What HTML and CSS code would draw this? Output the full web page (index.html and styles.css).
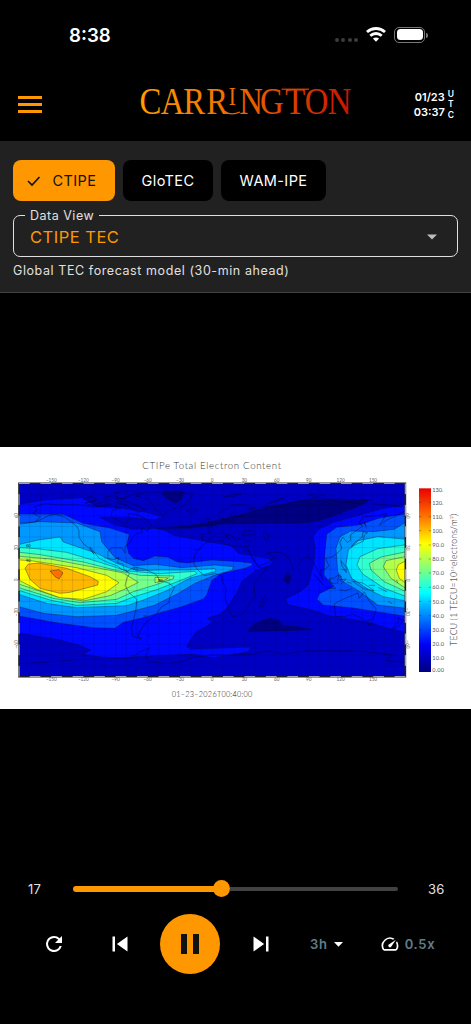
FILE: index.html
```html
<!DOCTYPE html>
<html lang="en">
<head>
    <meta charset="UTF-8">
    <meta name="viewport" content="width=device-width, initial-scale=1.0">
    <title>Carrington</title>
    <link rel="stylesheet" href="styles.css">
</head>
<body>
    <!-- Status bar -->
    <div class="status-bar">
        <span class="clock">8:38</span>
        <div class="status-icons">
            <div class="signal"><i></i><i></i><i></i><i></i></div>
            <svg class="wifi" width="20" height="15" viewBox="0 0 20 15" fill="none" stroke="#fff" stroke-width="2.9">
                <path d="M1 5C6.200.4 13.8.4 19 5"/>
                <path d="M4.300 8.700C7.500 5.800 12.500 5.800 15.700 8.700"/>
                <path d="M6.900 11.600Q10 9.200 13.100 11.600L10 14.700Z" fill="#fff" stroke="none"/>
            </svg>
            <div class="battery"><div class="battery-fill"></div></div>
            <div class="battery-tip"></div>
        </div>
    </div>

    <!-- App bar -->
    <header>
        <div class="menu"><i></i><i></i><i></i></div>
        <svg class="logo" width="214" height="48" viewBox="0 0 214 48">
            <defs>
                <linearGradient id="flare" gradientUnits="userSpaceOnUse" x1="0" y1="0" x2="250" y2="0">
                    <stop offset="0" stop-color="#ffa000"/>
                    <stop offset="0.45" stop-color="#f06a00"/>
                    <stop offset="1" stop-color="#c81400"/>
                </linearGradient>
            </defs>
            <text transform="scale(.85 1)" y="37" x="0.500 25.500 52 79 105.500 118 142.500 172 195 222" fill="url(#flare)">CARR<tspan class="small-i" dy="-9">I</tspan><tspan dy="9">NGTON</tspan></text>
            <path d="M86 34.500Q92 39 101 35" fill="none" stroke="#ee6800" stroke-width="1.300"/>
            <path d="M142.500 12.200H170" fill="none" stroke="#dc4400" stroke-width="1.200"/>
        </svg>
        <div class="utc">
            <div class="utc-time">01/23<br>03:37</div>
            <div class="utc-label">U<br>T<br>C</div>
        </div>
    </header>

    <!-- Model and data view -->
    <section class="filters">
        <div class="chips">
            <div class="chip active">
                <svg width="14" height="12" viewBox="0 0 14 12" fill="none" stroke="#111" stroke-width="1.700"><path d="M1 6L5 10L12.500 2"/></svg>
                <span>CTIPE</span>
            </div>
            <div class="chip glotec">GloTEC</div>
            <div class="chip wam">WAM-IPE</div>
        </div>
        <fieldset class="select">
            <legend>Data View</legend>
            <span>CTIPE TEC</span>
            <svg width="10" height="6" viewBox="0 0 10 6"><path d="M0 .5H10L5 5.500Z" fill="#bdbdbd"/></svg>
        </fieldset>
        <p class="description">Global TEC forecast model (30-min ahead)</p>
    </section>

    <!-- Forecast map -->
    <main>
        <svg class="chart" width="471" height="262" viewBox="0 6 1413 786">
            <defs>
                <linearGradient id="tec" x1="0" y1="1" x2="0" y2="0">
                    <stop offset="0" stop-color="#000080"/>
                    <stop offset=".15" stop-color="#0000f8"/>
                    <stop offset=".36" stop-color="#00b4ff"/>
                    <stop offset=".43" stop-color="#00ffff"/>
                    <stop offset=".56" stop-color="#80ff80"/>
                    <stop offset=".7" stop-color="#ffff00"/>
                    <stop offset=".85" stop-color="#ff7000"/>
                    <stop offset="1" stop-color="#e80000"/>
                </linearGradient>
                <clipPath id="frame"><rect x="57" y="115" width="1159" height="580"/></clipPath>
            </defs>
            <text class="chart-title" x="427" y="73" textLength="416">CTIPe Total Electron Content</text>

            <g clip-path="url(#frame)">
                <rect x="57" y="115" width="1159" height="580" fill="#0000c4"/>
                <g class="levels">
                    <!-- below 10 -->
                    <g fill="#000080">
                        <path d="M465 250Q570 243 615 235L715 210L815 185L895 168L1000 162L1103 165Q1100 177 1033 200L963 226Q910 237 865 235L665 237L565 250Z"/>
                        <path d="M485 142L530 138L552 142L545 162L528 175L495 158Z"/>
                        <path d="M852 400L858 386L869 384L873 395L867 418L853 409Z"/>
                        <path d="M744 560L752 545L785 527L812 520L838 527L845 540L900 546L940 554L850 557Z"/>
                    </g>
                    <!-- 20 -->
                    <g fill="#0008ff">
                        <path d="M50 180L130 165L250 158L290 185L370 190L440 202L490 216L465 224L380 217L300 217L340 238L400 253L465 250L500 258L520 271L635 292L695 302L715 325L805 340L817 350L812 360L765 378L725 410L710 445L680 490L660 508L622 520L640 532L590 560L575 580L560 605L575 613L665 609L753 606L745 620L640 638L580 628L465 632L330 640L250 628L272 615L235 600L180 585L50 563Z"/>
                        <path d="M1220 180L1150 190L1080 210L1000 232L955 253L940 275L946 310L942 350L925 420L900 440L857 462L862 478L945 497L985 512L1105 531L1180 555L1220 562Z"/>
                    </g>
                    <!-- 30 -->
                    <g fill="#0050ff">
                        <path d="M50 207L190 208L250 235L330 249L388 268L380 300L386 325L400 340L430 347L465 333L505 337L530 350L560 354L635 345L720 350L755 354L757 361L735 370L665 385L635 407L620 450L610 462L545 485L465 508L430 518L370 532L345 550L280 548L180 535L50 512Z"/>
                        <path d="M1220 207L1180 212L1135 220L1080 239L1010 247L980 268L975 320L972 390L1000 425L958 446L951 463L970 480L1060 489L1110 497L1220 514Z"/>
                    </g>
                    <!-- 40 -->
                    <g fill="#0098ff">
                        <path d="M50 235L120 230L230 234L300 260L305 290L345 338L400 362L465 358L545 368L645 360L700 365L697 375L645 390L585 415L535 445L465 480L430 490L350 511L230 515L130 505L50 483Z"/>
                        <path d="M1220 230L1183 253L1120 260L1053 258L1020 275L1008 310L1013 380L1030 410L1080 440L1133 480L1220 490Z"/>
                    </g>
                    <!-- 50 -->
                    <g fill="#00e4ff">
                        <path d="M50 300L115 285L180 276L190 291L290 325L350 355L410 377L480 375L565 375L645 371L648 379L570 399L500 437L430 465L380 482L230 488L140 475L50 446Z"/>
                        <path d="M1220 283L1133 275L1075 287L1045 315L1038 360L1055 400L1105 433L1150 455L1220 468Z"/>
                    </g>
                    <!-- 60 -->
                    <g fill="#30ffd0">
                        <path d="M50 307L110 311L200 322L300 352L380 378L480 386L585 379L590 386L540 407L470 434L400 456L350 475L230 481L150 465L50 434Z"/>
                        <path d="M1220 299L1133 311L1080 335L1071 360L1088 387L1153 430L1220 455Z"/>
                    </g>
                    <!-- 70 -->
                    <g fill="#74ff8c">
                        <path d="M50 321L120 329L250 351L340 374L420 391L522 393L520 401L465 420L400 440L350 463L240 473L160 460L50 426Z"/>
                        <path d="M1220 320L1143 336L1108 355L1113 375L1153 410L1220 441Z"/>
                    </g>
                    <!-- 80 -->
                    <g fill="#b4ff48">
                        <path d="M50 333L150 342L300 370L370 384L415 412L380 430L330 452L250 468L170 455L50 415Z"/>
                        <path d="M465 397L505 399L490 408L465 413Z"/>
                        <path d="M1220 334L1158 347L1150 365L1173 400L1220 432Z"/>
                    </g>
                    <!-- 90 -->
                    <g fill="#ffff00">
                        <path d="M50 344L100 348L230 368L320 391L357 413L320 440L250 463L180 458L110 433L50 402Z"/>
                        <path d="M1220 346L1195 359L1189 375L1198 400L1220 417Z"/>
                    </g>
                    <path fill="#ffb800" d="M75 370L85 357L118 354L200 370L270 395L295 409L293 420L210 442L180 445L120 430L90 403Z"/>
                    <path fill="#ff7000" d="M150 378L177 374L189 384L177 402L165 395Z"/>
                </g>

                <!-- coastlines in degrees, longitude and latitude -->
                <g class="coast" transform="translate(636 405) scale(3.22 -3.22)">
                    <path d="M-179 52L-165 54L-158 57L-152 60L-146 61L-138 59L-132 55L-126 50L-124 46L-124 40L-120 34L-115 30L-110 24L-114 31L-109 25L-105 20L-96 16L-88 13L-84 10L-79 8L-82 10L-83 15L-88 16L-87 21L-91 19L-97 20L-97 27L-93 30L-84 30L-81 25L-81 31L-76 35L-74 40L-70 43L-65 44L-66 49L-60 46L-56 51L-62 57L-70 61L-78 62L-77 56L-82 52L-88 56L-94 59L-93 65L-85 67L-95 70L-110 68L-125 70L-140 70L-156 71L-166 68L-163 65L-167 62L-160 59L-165 54"/>
                    <path d="M-79 8L-76 10L-72 12L-62 10L-52 5L-49 0L-40-3L-35-7L-39-15L-40-21L-47-25L-52-32L-57-36L-62-40L-66-46L-69-52L-66-55L-74-52L-75-44L-73-37L-71-28L-70-18L-77-12L-81-5L-79 2L-77 6L-79 8"/>
                    <path d="M-120 76L-112 78L-107 75L-115 73L-120 76M-118 72L-108 73L-104 69L-115 70ZM-100 77L-91 79L-95 74L-100 76M-88 73L-78 73L-72 70L-62 66L-68 63L-74 66L-80 70L-90 72ZM-92 81L-80 83L-65 82L-75 79L-85 76L-90 78M-105 72L-99 74L-97 71L-102 69ZM-90 76L-80 76L-86 74Z"/>
                    <path d="M-54 82L-35 83L-18 80L-22 74L-27 69L-40 65L-45 60L-53 66L-55 70L-60 76L-71 78L-62 82Z"/>
                    <path d="M-24 65L-20 66L-14 65L-18 63L-23 64ZM-5 50L1 52L-2 57L-5 58L-3 54L-5 50M-10 52L-6 52L-6 55L-10 54Z"/>
                    <path d="M-9 37L-9 43L-1 44L-4 48L2 51L8 54L10 57L12 54L20 55L24 59L29 60L22 60L22 65L17 61L14 55L8 58L5 61L12 66L20 70L30 70L40 67L33 66L40 64L46 68L60 69L68 68L72 72L80 73L100 77L112 74L130 72L150 71L170 69L179 68M-9 37L-5 36L0 39L4 43L9 44L16 38L12 43L16 42L20 40L23 37L26 40L30 36L36 36L34 31L25 32L20 31L11 34L10 37L-5 35L-10 31L-16 24L-17 15L-13 9L-7 4L3 6L9 4L10-2L13-8L12-17L16-28L19-34L26-33L32-28L36-20L40-15L39-5L43 1L51 11L43 12L38 19L33 29L43 13L52 16L59 22L51 25L57 26L66 25L72 20L76 9L80 13L82 17L89 22L94 17L98 10L103 1L101 9L105 10L109 13L106 20L113 22L121 29L119 35L122 40L126 35L129 37L129 42L140 50L137 54L142 59L155 60L163 62L156 51L163 56L172 60L179 64"/>
                    <path d="M28 42L35 42L41 42L37 46L31 46ZM48 46L53 42L52 37L49 38L48 43ZM44-25L49-14L50-17L47-25ZM11 77L18 80L27 80L20 78ZM52 71L58 74L68 77L60 73ZM90 79L100 81L105 79L96 78ZM138 75L149 75L145 73Z"/>
                    <path d="M95 5L104-5L100 0L95 5M105-7L115-8L109 1L114 2L118 5L117-3L110-3L109 1M120-4L125 1L119 0M120 18L125 12L125 7L121 14ZM131-1L141-3L151-10L141-8L135-4ZM130 31L136 34L141 36L142 42L145 44L141 45L140 40L133 35ZM143 50L142 54L144 48M118-9L124-10L130-8M119 4L121 3M126-2L130-3M121 10L124 9M146-5L152-5M155-7L163-11M164-20L168-22M172 0L173-3M-155 20L-156 19M-10 29L-17 28M80 8L82 7"/>
                    <path d="M114-22L122-18L129-15L136-12L137-17L142-11L146-19L153-27L150-37L144-38L138-35L131-32L124-34L115-34ZM145-41L148-41L147-43ZM173-35L178-38L175-42L171-45L167-46L172-41L174-38ZM69-49L70-49M-59-52L-57-52M-61-51L-60-52"/>
                    <path d="M-180-78L-160-77L-148-76L-125-74L-102-74L-100-72L-75-73L-67-67L-58-63L-62-70L-60-76L-42-78L-28-76L-18-72L0-70L20-70L38-69L52-66L68-69L85-66L110-66L130-66L145-67L168-70L162-75L180-77"/>
                </g>
                <path class="grid" d="M89 115V695M121 115V695M154 115V695M186 115V695M218 115V695M250 115V695M282 115V695M315 115V695M347 115V695M379 115V695M411 115V695M443 115V695M476 115V695M508 115V695M540 115V695M572 115V695M604 115V695M636 115V695M669 115V695M701 115V695M733 115V695M765 115V695M797 115V695M830 115V695M862 115V695M894 115V695M926 115V695M958 115V695M991 115V695M1023 115V695M1055 115V695M1087 115V695M1119 115V695M1152 115V695M1184 115V695M57 147H1216M57 179H1216M57 212H1216M57 244H1216M57 276H1216M57 308H1216M57 340H1216M57 373H1216M57 405H1216M57 437H1216M57 469H1216M57 501H1216M57 534H1216M57 566H1216M57 598H1216M57 630H1216M57 663H1216"/>
                <g class="contour-label">
                    <text x="78" y="306">60</text><text x="78" y="350">90</text><text x="400" y="375">40</text>
                    <text x="428" y="519">30</text><text x="532" y="352">30</text><text x="474" y="412">80</text><text x="392" y="638">20</text>
                </g>
            </g>
            <rect class="frame" x="57" y="115" width="1159" height="580"/>
            <rect class="frame-dash" x="57" y="115" width="1159" height="580"/>

            <g class="axis">
                <g>
                    <text x="154" y="110">−150</text><text x="250" y="110">−120</text><text x="347" y="110">−90</text>
                    <text x="443" y="110">−60</text><text x="540" y="110">−30</text><text x="636" y="110">0</text>
                    <text x="733" y="110">30</text><text x="830" y="110">60</text><text x="926" y="110">90</text>
                    <text x="1022" y="110">120</text><text x="1119" y="110">150</text>
                </g>
                <g>
                    <text x="154" y="709">−150</text><text x="250" y="709">−120</text><text x="347" y="709">−90</text>
                    <text x="443" y="709">−60</text><text x="540" y="709">−30</text><text x="636" y="709">0</text>
                    <text x="733" y="709">30</text><text x="830" y="709">60</text><text x="926" y="709">90</text>
                    <text x="1022" y="709">120</text><text x="1119" y="709">150</text>
                </g>
                <g>
                    <text transform="translate(53 212) rotate(-90)">60</text><text transform="translate(53 308) rotate(-90)">30</text>
                    <text transform="translate(53 405) rotate(-90)">0</text><text transform="translate(53 501) rotate(-90)">−30</text>
                    <text transform="translate(53 598) rotate(-90)">−60</text>
                </g>
                <g>
                    <text transform="translate(1219 212) rotate(90)">60</text><text transform="translate(1219 308) rotate(90)">30</text>
                    <text transform="translate(1219 405) rotate(90)">0</text><text transform="translate(1219 501) rotate(90)">−30</text>
                    <text transform="translate(1219 598) rotate(90)">−60</text>
                </g>
            </g>

            <!-- color scale -->
            <rect x="1257" y="130" width="36" height="551" fill="url(#tec)"/>
            <path class="scale-ticks" d="M1257 172H1264M1286 172H1293M1257 215H1264M1286 215H1293M1257 257H1264M1286 257H1293M1257 300H1264M1286 300H1293M1257 342H1264M1286 342H1293M1257 384H1264M1286 384H1293M1257 427H1264M1286 427H1293M1257 469H1264M1286 469H1293M1257 512H1264M1286 512H1293M1257 554H1264M1286 554H1293M1257 596H1264M1286 596H1293M1257 639H1264M1286 639H1293"/>
            <g class="scale-label">
                <text x="1297" y="142" textLength="33">130.</text><text x="1297" y="180" textLength="33">120.</text>
                <text x="1297" y="222" textLength="33">110.</text><text x="1297" y="264" textLength="33">100.</text>
                <text x="1297" y="306" textLength="35">90.0</text><text x="1297" y="349" textLength="35">80.0</text>
                <text x="1297" y="391" textLength="35">70.0</text><text x="1297" y="433" textLength="35">60.0</text>
                <text x="1297" y="476" textLength="35">50.0</text><text x="1297" y="518" textLength="35">40.0</text>
                <text x="1297" y="560" textLength="35">30.0</text><text x="1297" y="603" textLength="35">20.0</text>
                <text x="1297" y="645" textLength="35">10.0</text><text x="1297" y="681" textLength="35">0.00</text>
            </g>
            <text class="scale-title" transform="translate(1371 602) rotate(-90)" textLength="396">TECU (1 TECU=10<tspan class="sup" dy="-9">16</tspan><tspan dy="9">electrons/m²)</tspan></text>
            <text class="chart-date" x="515" y="755" textLength="242">01−23−2026T00:40:00</text>
        </svg>
    </main>

    <!-- Playback -->
    <div class="player">
        <div class="timeline">
            <span class="frame-now">17</span>
            <div class="track">
                <div class="played"></div>
                <div class="thumb"></div>
                <div class="remaining"></div>
            </div>
            <span class="frame-total">36</span>
        </div>
        <div class="controls">
            <svg class="refresh" width="24" height="24" viewBox="0 0 24 24" fill="#fff"><path d="M17.650 6.350A7.960 7.960 0 0 0 12 4a8 8 0 1 0 7.730 10h-2.080A6 6 0 1 1 12 6c1.660 0 3.140.69 4.220 1.780L13 11h7V4z"/></svg>
            <svg class="previous" width="30" height="30" viewBox="0 0 24 24" fill="#fff"><path d="M6 6h2v12H6zm3.500 6l8.500 6V6z"/></svg>
            <div class="pause"><i></i><i></i></div>
            <svg class="next" width="30" height="30" viewBox="0 0 24 24" fill="#fff"><path d="M6 18l8.500-6L6 6v12zM16 6v12h2V6h-2z"/></svg>
            <div class="range">3h<svg width="9" height="5" viewBox="0 0 9 5"><path d="M0 0H9L4.500 4.800Z" fill="#fff"/></svg></div>
            <div class="speed">
                <svg width="20" height="20" viewBox="0 0 24 24" fill="#fff"><path d="M20.380 8.570l-1.230 1.850a8 8 0 0 1-.22 7.580H5.070A8 8 0 0 1 15.580 6.850l1.850-1.230A10 10 0 0 0 3.350 19a2 2 0 0 0 1.720 1h13.850a2 2 0 0 0 1.740-1 10 10 0 0 0-.27-10.440zm-9.790 6.840a2 2 0 0 0 2.830 0l5.660-8.490-8.490 5.660a2 2 0 0 0 0 2.830z"/></svg>
                <span>0.5x</span>
            </div>
        </div>
    </div>
</body>
</html>
```
FILE: styles.css
```css
* {
    box-sizing: border-box;
}

body {
    margin: 0;
    width: 471px;
    height: 1024px;
    display: flex;
    flex-direction: column;
    overflow: hidden;
    background-color: #000;
    color: #fff;
    font-family: Inter, sans-serif;
}

svg {
    display: block;
    flex-shrink: 0;
}

/* Status bar */
.status-bar {
    height: 68px;
    padding: 2px 43px 0 69px;
    display: flex;
    align-items: center;
    justify-content: space-between;
}

.clock {
    font-size: 18.7px;
    font-weight: 600;
}

.status-icons {
    display: flex;
    align-items: center;
}

.signal {
    display: flex;
    gap: 2.5px;
    margin: 10px 8px 0 0;
}

.signal i {
    width: 4px;
    height: 4px;
    border-radius: 50%;
    background-color: #3c3c3c;
}

.wifi {
    margin: -2px 8px 0 0;
}

.battery {
    width: 31px;
    height: 16px;
    margin-top: -1px;
    padding: 1.5px;
    border: 1px solid #777;
    border-radius: 5px;
}

.battery-fill {
    height: 11px;
    border-radius: 3.5px;
    background-color: #fff;
}

.battery-tip {
    width: 2px;
    height: 5px;
    margin-left: 1px;
    border-radius: 0 2px 2px 0;
    background-color: #777;
}

/* App bar */
header {
    height: 73px;
    padding: 0 17px 0 18px;
    display: flex;
    align-items: center;
}

.menu {
    width: 24px;
    display: flex;
    flex-direction: column;
    gap: 4px;
}

.menu i {
    height: 2.700px;
    background-color: #ff9800;
}

.logo {
    margin: -7px 0 0 97px;
}

.logo text {
    font-family: "Liberation Serif", serif;
    font-size: 38.5px;
}

.logo .small-i {
    font-size: 25px;
}

.utc {
    margin-left: auto;
    display: flex;
    align-items: center;
    font-weight: 600;
}

.utc-time {
    font-size: 11px;
    line-height: 15px;
    text-align: right;
}

.utc-label {
    margin-left: 3px;
    font-size: 8.5px;
    line-height: 10.5px;
    text-align: center;
}

/* Filters */
.filters {
    height: 152px;
    padding: 19px 13px 0;
    background-color: #212121;
    border-bottom: 1px solid #424242;
}

.chips {
    display: flex;
    gap: 8px;
}

.chip {
    height: 41px;
    display: flex;
    align-items: center;
    justify-content: center;
    border-radius: 8px;
    background-color: #000;
    font-size: 14.5px;
    letter-spacing: 0.4px;
}

.chip.active {
    width: 102px;
    padding-right: 5px;
    gap: 12px;
    background-color: #ff9800;
    color: #111;
}

.glotec {
    width: 90px;
}

.wam {
    width: 105px;
}

.select {
    height: 48px;
    margin: 8px 0 0;
    padding: 0 20px 4px 16px;
    display: flex;
    align-items: center;
    justify-content: space-between;
    border: 1.500px solid #e0e0e0;
    border-radius: 7px;
}

.select legend {
    margin-left: -5px;
    padding: 1px 5px 0;
    font-size: 12.5px;
    line-height: 12px;
    letter-spacing: 0.5px;
    color: #e0e0e0;
}

.select span {
    font-size: 16.5px;
    line-height: 18px;
    letter-spacing: 0.5px;
    color: #ff9800;
}

.description {
    margin: 6px 0 0;
    font-size: 12.5px;
    line-height: 16px;
    letter-spacing: 0.58px;
    color: #e0e0e0;
}

/* Forecast map */
main {
    padding: 154px 0;
}

.chart {
    background-color: #fff;
    font-family: Lato, sans-serif;
}

.levels path {
    stroke: #001030;
    stroke-opacity: 0.55;
    stroke-width: 2;
    stroke-linejoin: round;
}

.coast {
    fill: none;
    stroke: #00001c;
    stroke-opacity: 0.65;
    stroke-width: 0.55;
    stroke-linejoin: round;
}

.grid {
    fill: none;
    stroke: #000030;
    stroke-opacity: 0.22;
    stroke-width: 1.5;
}

.frame {
    fill: none;
    stroke: #222;
    stroke-width: 5;
}

.frame-dash {
    fill: none;
    stroke: #bbb;
    stroke-width: 3;
    stroke-dasharray: 32.200 32.200;
}

.chart-title {
    font-size: 29px;
    font-weight: 300;
    fill: #333;
}

.chart-date {
    font-size: 22px;
    font-weight: 300;
    fill: #111;
}

.axis {
    font-size: 14px;
    fill: #666;
    text-anchor: middle;
}

.contour-label {
    font-size: 12px;
    fill: #002030;
}

.scale-label {
    font-size: 17px;
    fill: #555;
}

.scale-title {
    font-size: 26px;
    font-weight: 300;
    fill: #222;
}

.sup {
    font-size: 14px;
}

.scale-ticks {
    stroke: #222;
    stroke-opacity: 0.5;
    stroke-width: 2;
}

/* Playback */
.player {
    margin-top: 15.5px;
}

.timeline {
    height: 20px;
    display: flex;
    align-items: center;
    padding-left: 28px;
    font-size: 13px;
    letter-spacing: 0.3px;
    color: #e0e0e0;
}

.frame-now {
    width: 45px;
}

.track {
    width: 325px;
    display: flex;
    align-items: center;
    flex-shrink: 0;
}

.played {
    width: 145px;
    height: 6px;
    margin-right: -5px;
    border-radius: 3px;
    background-color: #ff9800;
}

.thumb {
    width: 17px;
    height: 17px;
    border-radius: 50%;
    background-color: #ff9800;
}

.remaining {
    flex: 1;
    height: 4px;
    border-radius: 0 2px 2px 0;
    background-color: #424242;
}

.frame-total {
    margin-left: 30px;
}

.controls {
    height: 60px;
    margin-top: 15.5px;
    padding-left: 42px;
    display: flex;
    align-items: center;
}

.previous {
    margin-left: 39px;
}

.pause {
    width: 60px;
    height: 60px;
    margin-left: 25px;
    display: flex;
    align-items: center;
    justify-content: center;
    gap: 5.500px;
    border-radius: 50%;
    background-color: #ff9800;
}

.pause i {
    width: 6px;
    height: 20px;
    background-color: #111;
}

.next {
    margin-left: 26px;
}

.range,
.speed {
    display: flex;
    align-items: center;
    font-size: 13px;
    font-weight: 600;
    letter-spacing: 0.7px;
    color: #607d8b;
}

.range {
    margin-left: 34px;
    gap: 6px;
}

.speed {
    margin-left: 37.5px;
    gap: 4.5px;
}
```
